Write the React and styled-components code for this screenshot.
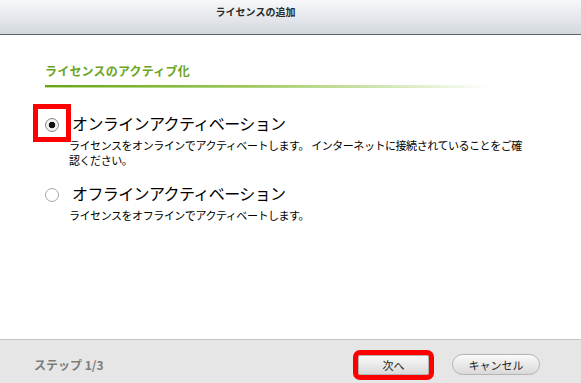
import React, { useState } from "react";
import styled, { createGlobalStyle } from "styled-components";

const GlobalStyle = createGlobalStyle`
  html, body {
    margin: 0;
    padding: 0;
    background: #ffffff;
  }
  body {
    font-family: "Noto Sans CJK JP", "Liberation Sans", sans-serif;
    color: #000;
  }
`;

const options = [
  {
    id: "online",
    title: "オンラインアクティベーション",
    desc: "ライセンスをオンラインでアクティベートします。 インターネットに接続されていることをご確認ください。",
  },
  {
    id: "offline",
    title: "オフラインアクティベーション",
    desc: "ライセンスをオフラインでアクティベートします。",
  },
];

const App = () => {
  const [selected, setSelected] = useState("online");

  return (
    <>
      <GlobalStyle />
      <Dialog>
        <TitleBar>ライセンスの追加</TitleBar>

        <Content>
          <Heading>ライセンスのアクティブ化</Heading>
          <Rule />

          <OptionList>
            {options.map((o) => (
              <Option key={o.id} onClick={() => setSelected(o.id)}>
                <OptionRow>
                  <RadioCell $highlight={o.id === "online"}>
                    <Radio $checked={selected === o.id} />
                  </RadioCell>
                  <OptionTitle>{o.title}</OptionTitle>
                </OptionRow>
                <OptionDesc>{o.desc}</OptionDesc>
              </Option>
            ))}
          </OptionList>
        </Content>

        <Footer>
          <Step>ステップ 1/3</Step>
          <Buttons>
            <Button $highlight>次へ</Button>
            <Button $pill>キャンセル</Button>
          </Buttons>
        </Footer>
      </Dialog>
    </>
  );
};

export default App;

const Dialog = styled.div`
  width: 581px;
  height: 383px;
  display: flex;
  flex-direction: column;
  overflow: hidden;
`;

const TitleBar = styled.div`
  height: 35px;
  box-sizing: border-box;
  padding: 4px 70px 0 0;
  text-align: center;
  font-size: 10px;
  line-height: 15px;
  font-weight: bold;
  color: #2a2a2a;
  background: linear-gradient(to bottom, #f7f8fa, #d3d8de);
  border-bottom: 1px solid #5e646b;
`;

const Content = styled.div`
  flex: 1;
  padding: 28px 33px 0 33px;
`;

const Heading = styled.div`
  margin-left: 12px;
  font-size: 12px;
  line-height: 16px;
  font-weight: bold;
  color: #6aa51c;
  letter-spacing: 0.2px;
`;

const Rule = styled.div`
  margin: 6px 0 0 12px;
  width: 445px;
  height: 2px;
  background: linear-gradient(to right, #68a218 0%, #9cc85c 45%, rgba(200, 226, 160, 0) 100%);
  border-bottom: 1px solid;
  border-image: linear-gradient(to right, #c3df9a, rgba(220, 238, 195, 0)) 1;
`;

const OptionList = styled.div`
  margin: 21px 0 0 5px;
  display: flex;
  flex-direction: column;
  gap: 11px;
`;

const Option = styled.div`
  cursor: default;
`;

const OptionRow = styled.div`
  display: flex;
  align-items: center;
  gap: 6px;
  height: 28px;
`;

const RadioCell = styled.div`
  width: 28px;
  height: 28px;
  display: flex;
  align-items: center;
  justify-content: center;
  outline: ${(p) => (p.$highlight ? "5px solid #ff0000" : "none")};
`;

const Radio = styled.span`
  margin-top: 4px;
  width: 14px;
  height: 14px;
  box-sizing: border-box;
  border-radius: 50%;
  border: 1px solid ${(p) => (p.$checked ? "#8a8a8a" : "#a8a8a8")};
  background: ${(p) =>
    p.$checked
      ? "radial-gradient(circle, #111 0, #111 3px, #f4f4f4 3.6px, #e2e2e2 100%)"
      : "radial-gradient(circle, #ffffff 0, #ffffff 60%, #f0f0f0 100%)"};
`;

const OptionTitle = styled.div`
  font-size: 16px;
  line-height: 28px;
  letter-spacing: -0.6px;
  color: #000;
`;

const OptionDesc = styled.div`
  margin: 1px 0 0 31px;
  max-width: 460px;
  font-size: 11px;
  line-height: 15px;
  letter-spacing: -0.45px;
  color: #000;
`;

const Footer = styled.div`
  height: 44px;
  box-sizing: border-box;
  padding: 6px 41px 0 34px;
  display: flex;
  align-items: center;
  justify-content: space-between;
  background: #e6e6e6;
  border-top: 1px solid #c4c4c4;
`;

const Step = styled.div`
  font-size: 12px;
  font-weight: bold;
  color: #7c7c7c;
`;

const Buttons = styled.div`
  display: flex;
  align-items: center;
  gap: 23px;
`;

const Button = styled.button`
  width: ${(p) => (p.$pill ? "88px" : "71px")};
  height: ${(p) => (p.$pill ? "21px" : "20px")};
  padding: 0;
  font-family: "Noto Sans CJK JP", "Liberation Sans", sans-serif;
  font-size: 11px;
  color: #222;
  background: linear-gradient(to bottom, #fafafa, #d9d9d9);
  border: 1px solid #b4b4b4;
  border-radius: ${(p) => (p.$pill ? "11px" : "2px")};
  outline: ${(p) => (p.$highlight ? "5px solid #ff0000" : "none")};
`;
